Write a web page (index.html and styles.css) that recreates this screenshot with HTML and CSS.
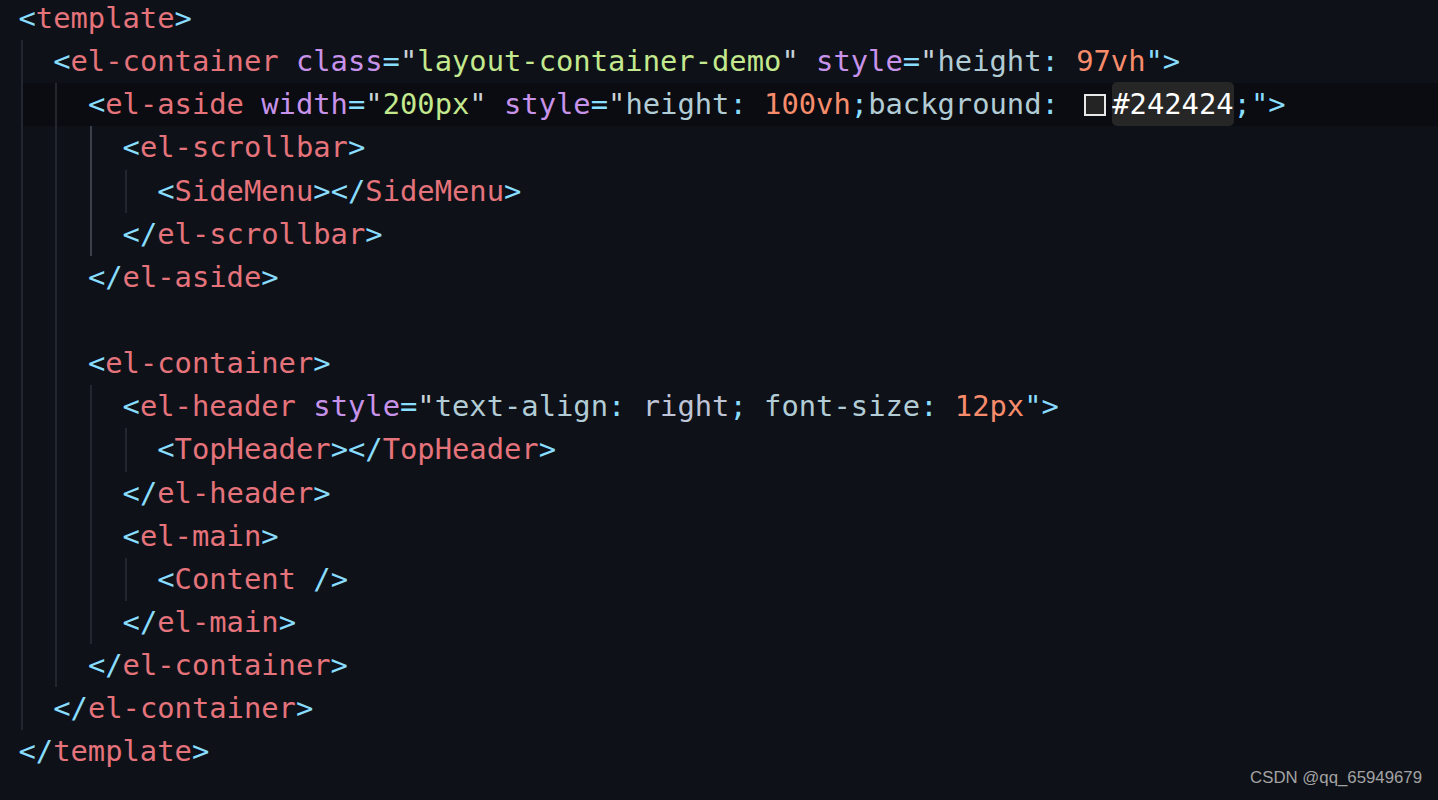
FILE: index.html
```html
<!DOCTYPE html>
<html lang="en">
<head>
    <meta charset="UTF-8">
    <title>template</title>
    <link rel="stylesheet" href="styles.css">
</head>
<body>
    <div class="editor">
        <div class="code">
            <div class="line"><span class="b">&lt;</span><span class="t">template</span><span class="b">&gt;</span></div>
            <div class="line"><span class="ig">  </span><span class="b">&lt;</span><span class="t">el-container</span> <span class="a">class</span><span class="b">=</span><span class="q">"</span><span class="s">layout-container-demo</span><span class="q">"</span> <span class="a">style</span><span class="b">=</span><span class="q">"</span><span class="p">height</span><span class="b">:</span> <span class="n">97vh</span><span class="b">"&gt;</span></div>
            <div class="line current"><span class="ig">  </span><span class="ig">  </span><span class="b">&lt;</span><span class="t">el-aside</span> <span class="a">width</span><span class="b">=</span><span class="q">"</span><span class="s">200px</span><span class="q">"</span> <span class="a">style</span><span class="b">=</span><span class="q">"</span><span class="p">height</span><span class="b">:</span> <span class="n">100vh</span><span class="b">;</span><span class="p">background</span><span class="b">:</span> <span class="swatch"></span><span class="hl">#242424</span><span class="b">;"&gt;</span></div>
            <div class="line"><span class="ig">  </span><span class="ig">  </span><span class="ig on">  </span><span class="b">&lt;</span><span class="t">el-scrollbar</span><span class="b">&gt;</span></div>
            <div class="line"><span class="ig">  </span><span class="ig">  </span><span class="ig on">  </span><span class="ig">  </span><span class="b">&lt;</span><span class="t">SideMenu</span><span class="b">&gt;&lt;/</span><span class="t">SideMenu</span><span class="b">&gt;</span></div>
            <div class="line"><span class="ig">  </span><span class="ig">  </span><span class="ig on">  </span><span class="b">&lt;/</span><span class="t">el-scrollbar</span><span class="b">&gt;</span></div>
            <div class="line"><span class="ig">  </span><span class="ig">  </span><span class="b">&lt;/</span><span class="t">el-aside</span><span class="b">&gt;</span></div>
            <div class="line"><span class="ig">  </span><span class="ig">  </span></div>
            <div class="line"><span class="ig">  </span><span class="ig">  </span><span class="b">&lt;</span><span class="t">el-container</span><span class="b">&gt;</span></div>
            <div class="line"><span class="ig">  </span><span class="ig">  </span><span class="ig">  </span><span class="b">&lt;</span><span class="t">el-header</span> <span class="a">style</span><span class="b">=</span><span class="q">"</span><span class="p">text-align</span><span class="b">:</span> <span class="v">right</span><span class="b">;</span> <span class="p">font-size</span><span class="b">:</span> <span class="n">12px</span><span class="b">"&gt;</span></div>
            <div class="line"><span class="ig">  </span><span class="ig">  </span><span class="ig">  </span><span class="ig">  </span><span class="b">&lt;</span><span class="t">TopHeader</span><span class="b">&gt;&lt;/</span><span class="t">TopHeader</span><span class="b">&gt;</span></div>
            <div class="line"><span class="ig">  </span><span class="ig">  </span><span class="ig">  </span><span class="b">&lt;/</span><span class="t">el-header</span><span class="b">&gt;</span></div>
            <div class="line"><span class="ig">  </span><span class="ig">  </span><span class="ig">  </span><span class="b">&lt;</span><span class="t">el-main</span><span class="b">&gt;</span></div>
            <div class="line"><span class="ig">  </span><span class="ig">  </span><span class="ig">  </span><span class="ig">  </span><span class="b">&lt;</span><span class="t">Content</span> <span class="b">/&gt;</span></div>
            <div class="line"><span class="ig">  </span><span class="ig">  </span><span class="ig">  </span><span class="b">&lt;/</span><span class="t">el-main</span><span class="b">&gt;</span></div>
            <div class="line"><span class="ig">  </span><span class="ig">  </span><span class="b">&lt;/</span><span class="t">el-container</span><span class="b">&gt;</span></div>
            <div class="line"><span class="ig">  </span><span class="b">&lt;/</span><span class="t">el-container</span><span class="b">&gt;</span></div>
            <div class="line"><span class="b">&lt;/</span><span class="t">template</span><span class="b">&gt;</span></div>
        </div>
        <div class="watermark">CSDN @qq_65949679</div>
    </div>
</body>
</html>
```

FILE: styles.css
```css
html, body {
    margin: 0;
    padding: 0;
    background: #0e1118;
    height: 100%;
    overflow: hidden;
}
.editor {
    position: relative;
    height: 800px;
    background: #0e1118;
}
.code {
    margin-top: -3px;
    font-family: "DejaVu Sans Mono", "Liberation Mono", monospace;
    font-size: 28.8px;
    line-height: 43.15px;
    color: #b2ccd6;
}
.line {
    white-space: pre;
    height: 43.15px;
    padding-left: 18.5px;
}
.line.current {
    background: linear-gradient(#0a0c11, #0a0c11) 22px 0 / 100% 100% no-repeat;
}
.ig {
    display: inline-block;
    background: linear-gradient(#22262f, #22262f) 2px 0 / 2px 100% no-repeat;
}
.ig.on {
    background-image: linear-gradient(#3b404b, #3b404b);
}
.b { color: #89ddff; }
.t { color: #e5737b; }
.a { color: #c792ea; }
.s { color: #c3e88d; }
.q { color: #c8d2d8; }
.p { color: #b2ccd6; }
.v { color: #bfc3d6; }
.n { color: #f78c6c; }
.swatch {
    display: inline-block;
    box-sizing: border-box;
    width: 22px;
    height: 22px;
    margin: 0 6px 0 8px;
    border: 2px solid #e8e8e8;
    background: #242424;
    vertical-align: -2px;
}
.hl {
    color: #ffffff;
    background: #262626;
    border-radius: 5px;
    padding: 5px 0;
}
.watermark {
    position: absolute;
    right: 16px;
    bottom: 9px;
    font-family: "Liberation Sans", Arial, sans-serif;
    font-size: 16.8px;
    color: #a3a3a3;
}
```
